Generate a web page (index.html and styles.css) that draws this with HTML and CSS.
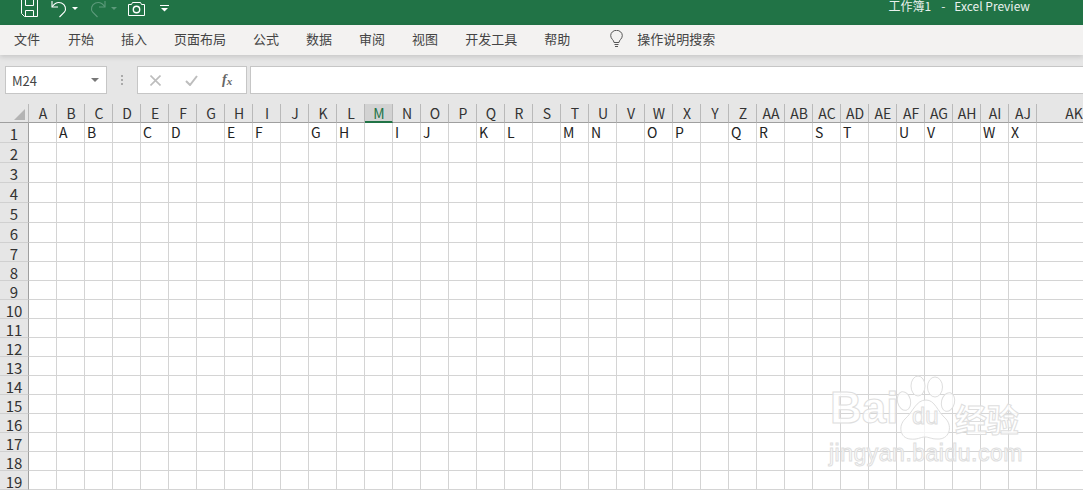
FILE: index.html
```html
<!DOCTYPE html>
<html lang="zh-CN">

<head>
    <meta charset="UTF-8">
    <title>工作簿1 - Excel Preview</title>
    <link rel="stylesheet" href="styles.css">
</head>

<body>
    <header class="titlebar">
        <div class="quick-tools">
            <svg class="icon-save" width="17" height="17" viewBox="0 0 17 17" fill="none" stroke="#fff">
                <path d="M.5 -1V13.5L3.5 16.5H16.5V-1"/>
                <path d="M4.5 -1V5.5H12.5V-1M4.5 16.5V10.5H12.5V16.5"/>
            </svg>
            <svg class="icon-undo" width="16" height="18" viewBox="0 0 16 18" fill="none" stroke="#fff" stroke-width="1.1">
                <path d="M1 1V7H7"/>
                <path d="M1.2 6.6C3.5 3.4 7 1.6 10.5 3C14.5 4.6 15.5 9 13.5 12L8.5 17"/>
            </svg>
            <span class="caret"></span>
            <svg class="icon-redo" width="16" height="18" viewBox="0 0 16 18" fill="none" stroke="#5d9a7b" stroke-width="1.1">
                <path d="M15 1V7H9"/>
                <path d="M14.8 6.6C12.5 3.4 9 1.6 5.5 3C1.5 4.6 .5 9 2.5 12L7.5 17"/>
            </svg>
            <span class="caret caret-dim"></span>
            <svg class="icon-camera" width="17" height="14" viewBox="0 0 17 14" fill="none" stroke="#fff">
                <path d="M.5 2.5H3.5L4.5 .5H12.5L13.5 2.5H16.5V13.5H.5Z"/>
                <circle cx="8.5" cy="7.5" r="3.2" stroke-width="1.4"/>
            </svg>
            <svg class="icon-more" width="9" height="7" viewBox="0 0 9 7" fill="#fff">
                <rect x="0" y="0" width="9" height="1"/>
                <path d="M1 3H8L4.5 6.5Z"/>
            </svg>
        </div>
        <div class="doc-title"><span>工作簿1</span><span class="doc-sep">-</span>Excel Preview</div>
    </header>

    <nav class="ribbon">
        <ul class="tabs">
            <li class="file-tab">文件</li>
            <li>开始</li>
            <li>插入</li>
            <li>页面布局</li>
            <li>公式</li>
            <li>数据</li>
            <li>审阅</li>
            <li>视图</li>
            <li>开发工具</li>
            <li>帮助</li>
        </ul>
        <div class="tell-me">
            <svg width="13" height="18" viewBox="0 0 13 18" fill="none" stroke="#555">
                <path d="M4 12.5C4 10 .7 9 .7 5.6A5.8 5.3 0 0 1 12.3 5.6C12.3 9 9 10 9 12.5Z"/>
                <path d="M4.5 14.5H8.5M5 16.5H8"/>
            </svg>
            <span>操作说明搜索</span>
        </div>
    </nav>

    <section class="formula-area">
        <div class="name-box">
            <span>M24</span>
            <span class="name-arrow"></span>
        </div>
        <div class="grip"></div>
        <div class="formula-buttons">
            <svg width="11" height="11" viewBox="0 0 11 11" stroke="#bdbdbd" stroke-width="1.6">
                <path d="M.5 .5L10.5 10.5M10.5 .5L.5 10.5"/>
            </svg>
            <svg width="13" height="11" viewBox="0 0 13 11" fill="none" stroke="#bdbdbd" stroke-width="2">
                <path d="M1 6L5 10L12 1"/>
            </svg>
            <span class="fx">f<sub>x</sub></span>
        </div>
        <div class="formula-input"></div>
    </section>

    <main class="sheet" id="sheet">
        <div class="watermark">
            <span class="wm-bai">Bai</span>
            <svg class="wm-paw" width="60" height="66" viewBox="0 0 60 66" fill="#fff" fill-opacity=".75" stroke="#dedede">
                <ellipse cx="8" cy="26" rx="6.5" ry="9.5" transform="rotate(-14 8 26)"/>
                <ellipse cx="22" cy="11" rx="7" ry="10"/>
                <ellipse cx="39" cy="12" rx="7.5" ry="10"/>
                <ellipse cx="52" cy="27" rx="6.5" ry="9.5" transform="rotate(14 52 27)"/>
                <path d="M30 25C39 25 41 36 50 44C57 52 53 65 41 64C35 64 33 62 29 62C24 62 22 65 14 64C4 63 2 51 9 44C17 37 20 25 30 25Z"/>
            </svg>
            <span class="wm-du">du</span>
            <span class="wm-cn">经验</span>
            <span class="wm-url">jingyan.baidu.com</span>
        </div>
    </main>

    <script src="script.js"></script>
</body>

</html>
```

FILE: styles.css
```css
html, body {
    margin: 0;
    padding: 0;
    height: 491px;
    overflow: hidden;
    background-color: #fff;
    font-family: "Noto Sans CJK SC", "Noto Sans", sans-serif;
    color: #444;
}

.titlebar {
    display: flex;
    justify-content: space-between;
    height: 25px;
    background-color: #217346;
    color: #fff;
    overflow: hidden;
}

.quick-tools {
    display: flex;
    align-items: flex-start;
    padding-left: 21px;
}

.icon-undo {
    margin-left: 13px;
}

.caret {
    width: 0;
    height: 0;
    margin: 7px 0 0 5px;
    border-left: 3px solid transparent;
    border-right: 3px solid transparent;
    border-top: 3px solid #fff;
}

.caret-dim {
    border-top-color: #5d9a7b;
}

.icon-redo {
    margin-left: 12px;
}

.icon-camera {
    margin: 2px 0 0 11px;
}

.icon-more {
    margin: 5px 0 0 15px;
}

.doc-title {
    margin-right: 53px;
    font-size: 12px;
    line-height: 12px;
    color: #e9f1ed;
}

.doc-sep {
    margin: 0 9px 0 10px;
}

.ribbon {
    position: relative;
    z-index: 1;
    display: flex;
    align-items: center;
    box-sizing: border-box;
    height: 30px;
    padding-bottom: 3px;
    background-color: #f3f2f1;
    box-shadow: 0 2px 5px rgba(0, 0, 0, 0.14);
    font-size: 13px;
}

.tabs {
    display: flex;
    gap: 27px;
    margin: 0;
    padding: 0 0 0 14px;
    list-style: none;
}

.file-tab {
    margin-right: 1px;
}

.tell-me {
    display: flex;
    align-items: center;
    gap: 14px;
    margin-left: 40px;
}

.formula-area {
    display: flex;
    align-items: stretch;
    box-sizing: border-box;
    height: 49px;
    padding: 11px 0 10px 5px;
    background-color: #e6e6e6;
}

.name-box {
    display: flex;
    align-items: center;
    justify-content: space-between;
    box-sizing: border-box;
    width: 102px;
    padding: 0 7px 0 6px;
    background-color: #fff;
    border: 1px solid #c6c6c6;
    font-size: 13px;
}

.name-arrow {
    width: 0;
    height: 0;
    border-left: 4px solid transparent;
    border-right: 4px solid transparent;
    border-top: 4px solid #777;
}

.grip {
    width: 2px;
    height: 10px;
    margin: 9px 14px 0 14px;
    background-image: linear-gradient(#aaa 2px, transparent 2px);
    background-size: 2px 4px;
}

.formula-buttons {
    display: flex;
    align-items: center;
    box-sizing: border-box;
    width: 110px;
    padding-left: 12px;
    background-color: #fff;
    border: 1px solid #c6c6c6;
}

.formula-buttons svg + svg {
    margin-left: 24px;
}

.fx {
    margin-left: 24px;
    font-family: "Liberation Serif", serif;
    font-style: italic;
    font-weight: bold;
    font-size: 14px;
    line-height: 14px;
    color: #666;
}

.fx sub {
    font-size: 11px;
    line-height: 0;
    vertical-align: -1px;
}

.formula-input {
    flex: 1;
    margin-left: 3px;
    background-color: #fff;
    border: 1px solid #c6c6c6;
    border-right: none;
}

.sheet {
    position: relative;
    display: grid;
    grid-template-columns: 29px repeat(36, 28px) 74px;
    grid-template-rows: 19px repeat(6, 20px) repeat(13, 19px);
    height: 387px;
    overflow: hidden;
    font-size: 14px;
    line-height: 18px;
    color: #222;
}

.cell {
    box-sizing: border-box;
    padding-left: 2px;
    border-right: 1px solid #d4d4d4;
    border-bottom: 1px solid #d4d4d4;
    white-space: nowrap;
}

.col-head {
    box-sizing: border-box;
    padding-left: 1px;
    text-align: center;
    background-color: #e6e6e6;
    border-bottom: 1px solid #9f9f9f;
    border-right: 1px solid #b9b9b9;
    color: #333;
    line-height: 18px;
    overflow: hidden;
}

.col-head.active {
    background-color: #d2d2d2;
    border-bottom: 2px solid #217346;
    color: #217346;
}

.corner {
    position: relative;
    box-sizing: border-box;
    background-color: #e6e6e6;
    border-right: 1px solid #b9b9b9;
    border-bottom: 1px solid #9f9f9f;
}

.corner::after {
    content: "";
    position: absolute;
    right: 3px;
    bottom: 2px;
    width: 0;
    height: 0;
    border-left: 11px solid transparent;
    border-bottom: 11px solid #b4b4b4;
}

.row-head {
    box-sizing: border-box;
    padding-top: 1px;
    text-align: center;
    background-color: #e6e6e6;
    border-right: 1px solid #9f9f9f;
    border-bottom: 1px solid #d0d0d0;
    font-size: 15px;
    line-height: 20px;
    color: #333;
}

.watermark {
    position: absolute;
    left: 828px;
    top: 271px;
    width: 200px;
    height: 96px;
    pointer-events: none;
    color: rgba(255, 255, 255, 0.75);
    -webkit-text-stroke: 1px #dedede;
}

.watermark span {
    position: absolute;
    white-space: nowrap;
}

.wm-bai {
    left: 2px;
    top: 8px;
    font-family: "Liberation Sans", sans-serif;
    font-weight: bold;
    font-size: 44px;
    line-height: 50px;
}

.wm-paw {
    position: absolute;
    left: 68px;
    top: 0;
}

.wm-du {
    left: 84px;
    top: 27px;
    font-family: "Liberation Sans", sans-serif;
    font-size: 24px;
    line-height: 28px;
}

.wm-cn {
    left: 127px;
    top: 21px;
    font-weight: bold;
    font-size: 32px;
    line-height: 44px;
}

.wm-url {
    left: 1px;
    top: 62px;
    font-family: "Liberation Sans", sans-serif;
    font-size: 23px;
    line-height: 32px;
    letter-spacing: 0.5px;
}
```

FILE: script.js
```js
const sheet = document.getElementById('sheet');
const watermark = sheet.querySelector('.watermark');

// column letters A..AK
const columns = [];
for (let i = 0; i < 37; i++) {
    columns.push(i < 26 ? String.fromCharCode(65 + i) : 'A' + String.fromCharCode(65 + i - 26));
}

// what is typed into row 1
const firstRow = {
    B: 'A', C: 'B', E: 'C', F: 'D', H: 'E', I: 'F', K: 'G', L: 'H',
    N: 'I', O: 'J', Q: 'K', R: 'L', T: 'M', U: 'N', W: 'O', X: 'P',
    Z: 'Q', AA: 'R', AC: 'S', AD: 'T', AF: 'U', AG: 'V', AI: 'W', AJ: 'X'
};

function addCell(className, text) {
    const cell = document.createElement('div');
    cell.className = className;
    cell.textContent = text || '';
    sheet.insertBefore(cell, watermark);
}

addCell('corner');
columns.forEach(col => {
    addCell(col === 'M' ? 'col-head active' : 'col-head', col);
});

for (let row = 1; row <= 19; row++) {
    addCell('row-head', row);
    columns.forEach(col => {
        addCell('cell', row === 1 ? firstRow[col] : '');
    });
}
```
